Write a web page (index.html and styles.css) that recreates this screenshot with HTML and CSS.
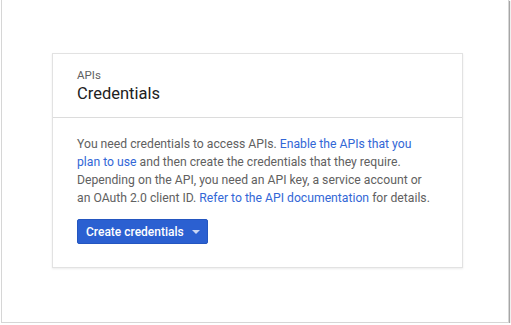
FILE: index.html
```html
<!DOCTYPE html>
<html lang="en">
<head>
    <meta charset="UTF-8">
    <meta name="viewport" content="width=device-width, initial-scale=1.0">
    <title>Credentials</title>
    <link rel="stylesheet" href="styles.css">
</head>
<body>

    <div class="frame">
        <div class="card">
            <!-- Judul kartu -->
            <div class="card-header">
                <p class="eyebrow">APIs</p>
                <h1 class="title">Credentials</h1>
            </div>

            <!-- Isi kartu -->
            <div class="card-body">
                <p class="intro">
                    You need credentials to access APIs. <a href="#">Enable the APIs that you plan to use</a>
                    and then create the credentials that they require. Depending on the API, you need an
                    API key, a service account or an OAuth 2.0 client ID.
                    <a href="#">Refer to the API documentation</a> for details.
                </p>
                <button class="btn-create">
                    Create credentials
                    <span class="caret"></span>
                </button>
            </div>
        </div>
    </div>

</body>
</html>
```

FILE: styles.css
```css
/* Gaya dasar */
body {
    font-family: 'Roboto', 'Liberation Sans', sans-serif;
    margin: 0;
    padding: 0;
    background: #fff;
    color: #212121;
}
.frame {
    box-sizing: border-box;
    height: 323px;
    margin: 0 2px 0 1px;
    padding: 53px 0 0 50px;
    border: 1px solid #d6d6d6;
    border-top: none;
    box-shadow: 1px 1px 1px rgba(0, 0, 0, 0.35);
}

/* Kartu */
.card {
    width: 409px;
    border: 1px solid #e2e2e2;
    box-shadow: 0 1px 2px rgba(0, 0, 0, 0.08);
    background: #fff;
}
.card-header {
    padding: 13px 24px 13px;
    border-bottom: 1px solid #dcdcdc;
}
.eyebrow {
    margin: 0;
    font-size: 11.5px;
    line-height: 16px;
    color: #616161;
}
.title {
    margin: 1px 0 0;
    font-size: 16.5px;
    font-weight: 400;
    line-height: 20px;
    color: #212121;
}
.card-body {
    padding: 17px 24px 23px;
}
.intro {
    max-width: 359px;
    margin: 0 0 12px;
    font-size: 12.2px;
    line-height: 18px;
    color: #616161;
}
.intro a {
    color: #3367d6;
    text-decoration: none;
}

/* Tombol */
.btn-create {
    display: flex;
    align-items: center;
    height: 25px;
    padding: 0 7px 0 8px;
    border: 1px solid #2456c0;
    border-radius: 2px;
    background: #2b60d1;
    color: #fff;
    font-family: inherit;
    font-size: 12px;
    font-weight: 500;
}
.caret {
    margin-left: 8px;
    border-left: 4px solid transparent;
    border-right: 4px solid transparent;
    border-top: 4px solid #c9d6f4;
}
```
